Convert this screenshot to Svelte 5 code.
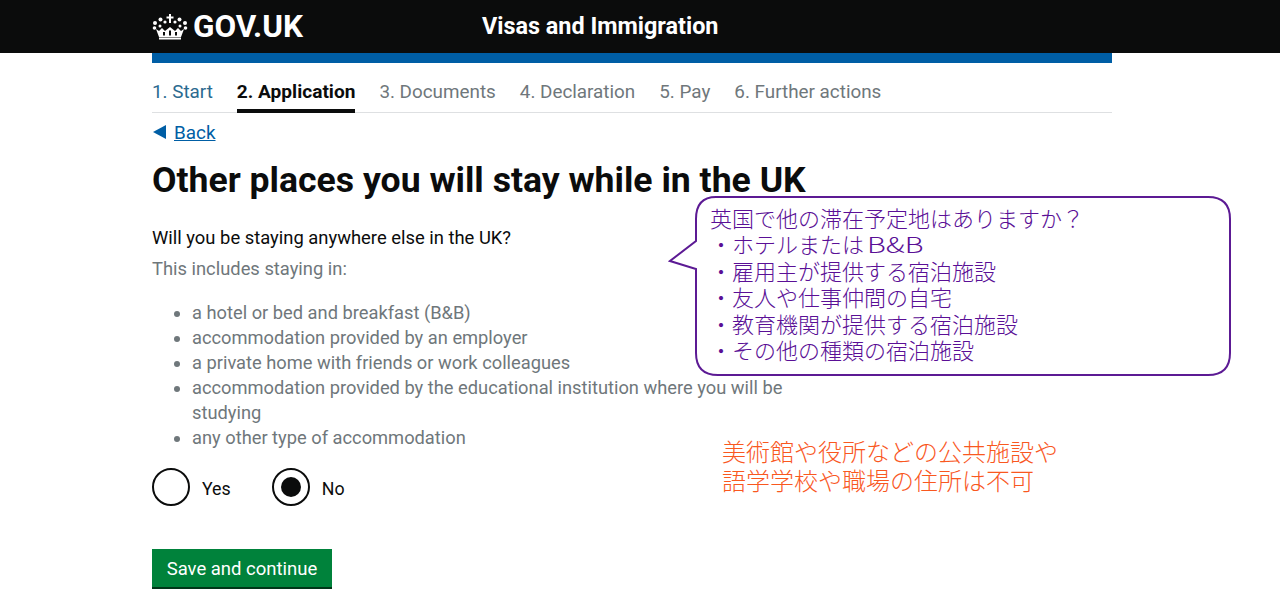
<script>
  const steps = [
    { label: '1. Start', state: 'done' },
    { label: '2. Application', state: 'active' },
    { label: '3. Documents', state: 'todo' },
    { label: '4. Declaration', state: 'todo' },
    { label: '5. Pay', state: 'todo' },
    { label: '6. Further actions', state: 'todo' }
  ];

  const stays = [
    'a hotel or bed and breakfast (B&B)',
    'accommodation provided by an employer',
    'a private home with friends or work colleagues',
    'accommodation provided by the educational institution where you will be studying',
    'any other type of accommodation'
  ];

  const notes = [
    '雇用主が提供する宿泊施設',
    '友人や仕事仲間の自宅',
    '教育機関が提供する宿泊施設',
    'その他の種類の宿泊施設'
  ];

  let answer = $state('no');
</script>

<header class="top">
  <div class="top-inner">
    <div class="logo">
      <svg class="crown" viewBox="0 0 36 26" width="36" height="26" aria-hidden="true">
        <g fill="#fff">
          <path d="M17 0h2v2.500h2.500v2H19V9h-2V4.500h-2.500v-2H17z"/>
          <circle cx="8.500" cy="5.500" r="2"/>
          <circle cx="13" cy="8" r="1.600"/>
          <circle cx="23" cy="8" r="1.600"/>
          <circle cx="27.500" cy="5.500" r="2"/>
          <circle cx="3" cy="9" r="2"/>
          <circle cx="33" cy="9" r="2"/>
          <circle cx="2.500" cy="14" r="1.800"/>
          <circle cx="33.500" cy="14" r="1.800"/>
          <circle cx="8" cy="12" r="1.500"/>
          <circle cx="28" cy="12" r="1.500"/>
          <path d="M4 15l3 2 3-3 3 3 5-4 5 4 3-3 3 3 3-2-3 8H7z"/>
          <rect x="7" y="23.500" width="22" height="2"/>
        </g>
        <g fill="#0b0c0c">
          <rect x="17" y="16.500" width="2" height="5"/>
          <rect x="11" y="18" width="2" height="3.500"/>
          <rect x="23" y="18" width="2" height="3.500"/>
        </g>
      </svg>
      <span>GOV.UK</span>
    </div>
    <div class="service">Visas and Immigration</div>
  </div>
</header>

<main class="page">
  <div class="blue-bar"></div>

  <nav class="steps">
    {#each steps as step}
      <span class="step {step.state}">{step.label}</span>
    {/each}
  </nav>

  <div class="back">
    <span class="back-arrow"></span>
    <a href="#back">Back</a>
  </div>

  <h1>Other places you will stay while in the UK</h1>

  <p class="question">Will you be staying anywhere else in the UK?</p>
  <p class="hint">This includes staying in:</p>
  <ul>
    {#each stays as stay}
      <li>{stay}</li>
    {/each}
  </ul>

  <div class="radios">
    <label class="radio">
      <input type="radio" name="stay" value="yes" bind:group={answer} />
      <span class="mark"></span>
      <span class="radio-label">Yes</span>
    </label>
    <label class="radio">
      <input type="radio" name="stay" value="no" bind:group={answer} />
      <span class="mark"></span>
      <span class="radio-label">No</span>
    </label>
  </div>

  <button class="save">Save and continue</button>

  <aside class="callout">
    <svg class="callout-shape" viewBox="0 0 564 182" width="564" height="182" aria-hidden="true">
      <path
        d="M48 1H540Q562 1 562 23V157Q562 179 540 179H50Q28 179 28 157V73L2 65L28 45V23Q28 1 48 1Z"
        fill="#fff"
        stroke="#5c1a94"
        stroke-width="2"
      />
    </svg>
    <div class="callout-text">
      <div>英国で他の滞在予定地はありますか？</div>
      <div>・ホテルまたは<span class="wide">B&amp;B</span></div>
      {#each notes as note}
        <div>・{note}</div>
      {/each}
    </div>
  </aside>

  <div class="warning">
    <div>美術館や役所などの公共施設や</div>
    <div>語学学校や職場の住所は不可</div>
  </div>
</main>

<style>
  :global(body) {
    background: #fff;
    color: #0b0c0c;
    font-family: Roboto, "Liberation Sans", sans-serif;
    overflow: hidden;
  }

  .top {
    background: #0b0c0c;
    height: 53px;
    color: #fff;
  }

  .top-inner {
    width: 960px;
    margin-left: 152px;
    display: flex;
    align-items: center;
    height: 53px;
  }

  .logo {
    display: flex;
    align-items: center;
    gap: 5px;
    width: 330px;
    font-size: 31.500px;
    font-weight: 700;
  }

  .service {
    font-size: 23.400px;
    font-weight: 700;
    margin-bottom: 1px;
  }

  .page {
    position: relative;
    width: 960px;
    margin-left: 152px;
  }

  .blue-bar {
    height: 10px;
    background: #005ea5;
  }

  .steps {
    display: flex;
    gap: 24px;
    border-bottom: 1px solid #dee0e2;
    font-size: 18.850px;
    box-sizing: border-box;
    height: 50px;
  }

  .step {
    padding-top: 18px;
    box-sizing: border-box;
    height: 50px;
  }

  .done {
    color: #2b6a8f;
  }

  .active {
    color: #0b0c0c;
    padding-top: 17px;
    font-size: 19.100px;
    font-weight: 700;
    border-bottom: 4px solid #0b0c0c;
  }

  .todo {
    color: #6f777b;
  }

  .back {
    display: flex;
    align-items: center;
    gap: 8px;
    height: 38px;
    font-size: 18.900px;
  }

  .back-arrow {
    width: 0;
    height: 0;
    border-style: solid;
    border-width: 7px 13px 7px 0;
    border-color: transparent #005ea5 transparent transparent;
    margin-left: 1px;
  }

  .back a {
    color: #005ea5;
  }

  h1 {
    margin: 9px 0 0;
    font-size: 35.600px;
    line-height: 40px;
    font-weight: 700;
  }

  .question {
    margin: 25px 0 0;
    font-size: 18.400px;
    line-height: 25px;
  }

  .hint {
    margin: 6px 0 0;
    font-size: 18.350px;
    line-height: 25px;
    color: #6f777b;
  }

  ul {
    margin: 19px 0 0;
    padding: 0 0 0 40px;
    width: 640px;
    color: #6f777b;
    font-size: 18.300px;
    line-height: 25px;
  }

  .radios {
    display: flex;
    gap: 41px;
    margin-top: 18px;
  }

  .radio {
    display: flex;
    align-items: center;
    gap: 12px;
    font-size: 17.800px;
  }

  .radio-label {
    padding-top: 2px;
  }

  .radio input {
    position: absolute;
    opacity: 0;
  }

  .mark {
    width: 38px;
    height: 38px;
    box-sizing: border-box;
    border: 2px solid #0b0c0c;
    border-radius: 50%;
    display: flex;
    align-items: center;
    justify-content: center;
  }

  .radio input:checked + .mark::after {
    content: '';
    width: 20px;
    height: 20px;
    border-radius: 50%;
    background: #0b0c0c;
  }

  .save {
    display: block;
    margin-top: 43px;
    width: 180px;
    height: 40px;
    padding: 2px 0 0;
    border: 0;
    border-bottom: 2px solid #003618;
    background: #00823b;
    color: #fff;
    font: inherit;
    font-size: 18.500px;
  }

  .callout {
    position: absolute;
    left: 516px;
    top: 143px;
    width: 564px;
    height: 182px;
  }

  .callout-shape {
    position: absolute;
    left: 0;
    top: 0;
  }

  .callout-text {
    position: absolute;
    left: 42px;
    top: 8px;
    color: #5a0f96;
    font-family: "Noto Sans CJK JP", sans-serif;
    font-size: 22px;
    line-height: 26.400px;
    font-weight: 300;
    white-space: nowrap;
  }

  .wide {
    display: inline-block;
    margin-left: 3px;
    transform: scaleX(1.330);
    transform-origin: left center;
  }

  .warning {
    position: absolute;
    left: 570px;
    top: 383px;
    color: #f9581f;
    font-family: "Noto Sans CJK JP", sans-serif;
    font-size: 24px;
    line-height: 29px;
    font-weight: 300;
    white-space: nowrap;
  }
</style>
